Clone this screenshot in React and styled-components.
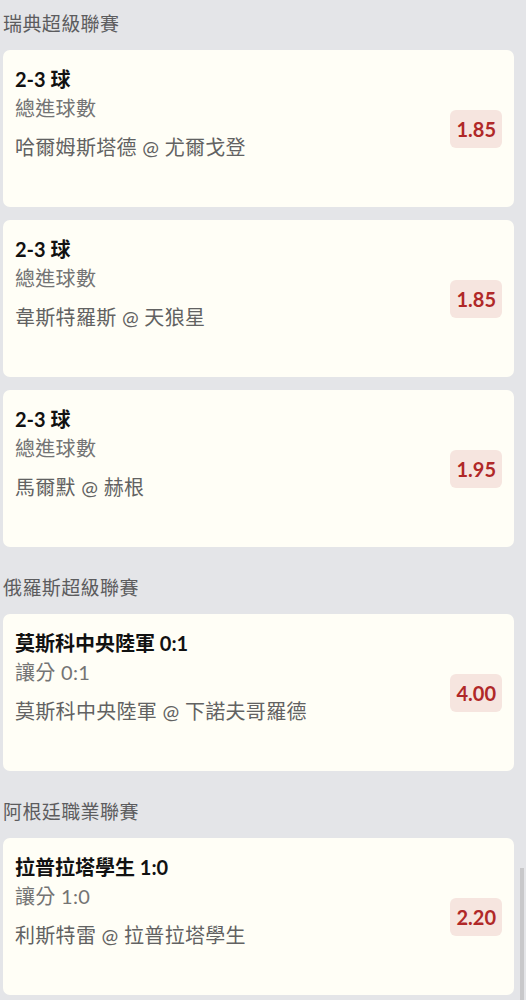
import React from 'react';
import styled, { createGlobalStyle } from 'styled-components';

const GlobalStyle = createGlobalStyle`
  html, body {
    margin: 0;
    padding: 0;
    background: #e4e5e8;
  }
  body {
    font-family: Lato, "Noto Sans CJK TC", sans-serif;
  }
`

const Page = styled.div`
  position: relative;
  min-height: 1000px;
  padding: 11px 12px 0 3px;
  box-sizing: border-box;
  overflow: hidden;
`

const Section = styled.section`
  & + & {
    margin-top: 28px;
  }
`

const LeagueName = styled.h2`
  margin: 0 0 13px;
  font-size: 19px;
  line-height: 26px;
  font-weight: 400;
  letter-spacing: 0.4px;
  color: #5c5c5e;
`

const CardList = styled.div`
  display: flex;
  flex-direction: column;
  gap: 13px;
`

const BetCard = styled.div`
  display: flex;
  align-items: center;
  justify-content: space-between;
  min-height: 157px;
  box-sizing: border-box;
  padding: 16px 12px 16px 12px;
  background: #fffef6;
  border-radius: 7px;
`

const Info = styled.div`
  display: flex;
  flex-direction: column;
  align-self: flex-start;
`

const Selection = styled.div`
  font-size: 20px;
  line-height: 26px;
  font-weight: 700;
  color: #111;
`

const Market = styled.div`
  font-size: 20px;
  line-height: 32px;
  font-weight: 400;
  letter-spacing: 0.3px;
  color: #747474;
`

const Match = styled.div`
  margin-top: 9px;
  font-size: 20px;
  line-height: 28px;
  font-weight: 400;
  letter-spacing: 0.3px;
  color: #626262;
`

const Odds = styled.div`
  padding: 6px 6px;
  border-radius: 6px;
  background: #f6e5df;
  color: #b02828;
  font-size: 20px;
  line-height: 26px;
  font-weight: 700;
`

const ScrollThumb = styled.div`
  position: absolute;
  right: 2px;
  top: 868px;
  width: 4px;
  height: 140px;
  background: #c8c8ca;
`

const sections = [
  {
    league: '瑞典超級聯賽',
    bets: [
      { pick: '2-3 球', market: '總進球數', match: '哈爾姆斯塔德 @ 尤爾戈登', odds: '1.85' },
      { pick: '2-3 球', market: '總進球數', match: '韋斯特羅斯 @ 天狼星', odds: '1.85' },
      { pick: '2-3 球', market: '總進球數', match: '馬爾默 @ 赫根', odds: '1.95' },
    ],
  },
  {
    league: '俄羅斯超級聯賽',
    bets: [
      { pick: '莫斯科中央陸軍 0:1', market: '讓分 0:1', match: '莫斯科中央陸軍 @ 下諾夫哥羅德', odds: '4.00' },
    ],
  },
  {
    league: '阿根廷職業聯賽',
    bets: [
      { pick: '拉普拉塔學生 1:0', market: '讓分 1:0', match: '利斯特雷 @ 拉普拉塔學生', odds: '2.20' },
    ],
  },
]

const App = () => {
  return (
    <>
      <GlobalStyle />
      <Page>
        {sections.map((section) => (
          <Section key={section.league}>
            <LeagueName>{section.league}</LeagueName>
            <CardList>
              {section.bets.map((bet) => (
                <BetCard key={bet.match}>
                  <Info>
                    <Selection>{bet.pick}</Selection>
                    <Market>{bet.market}</Market>
                    <Match>{bet.match}</Match>
                  </Info>
                  <Odds>{bet.odds}</Odds>
                </BetCard>
              ))}
            </CardList>
          </Section>
        ))}
        <ScrollThumb />
      </Page>
    </>
  )
}

export default App
